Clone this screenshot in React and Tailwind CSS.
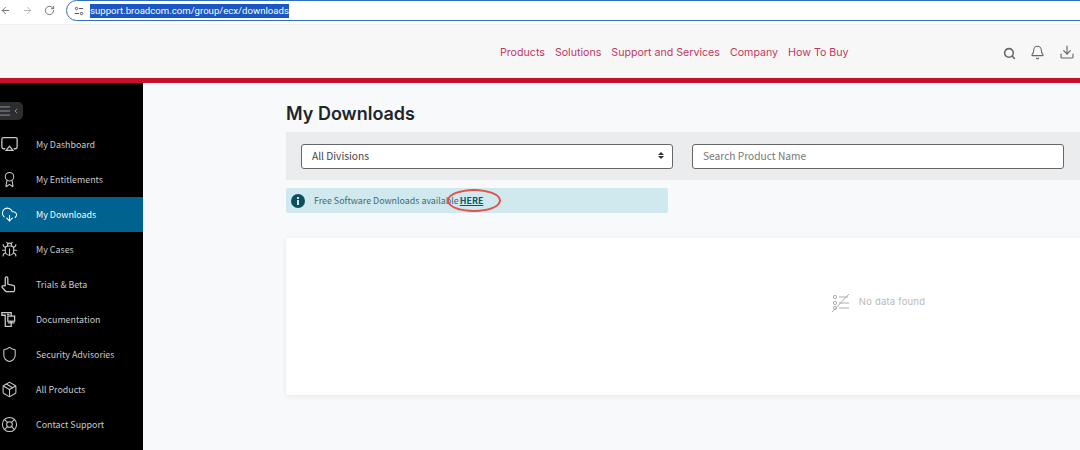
import { ArrowLeft, ArrowRight, RotateCw, Bell, Download, Search, Shield, Package, LifeBuoy, Bug, Award, CloudDownload, ChevronLeft, Menu } from "lucide-react";

const navLinks = ["Products", "Solutions", "Support and Services", "Company", "How To Buy"];

function DocsIcon(props) {
  return (
    <svg viewBox="0 0 20 20" fill="none" stroke="currentColor" strokeWidth="1.3" {...props}>
      <path d="M1 2h11v16H5V5H1z" />
      <rect x="8" y="6" width="8" height="6" fill="#000" />
      <path d="M12 12v2M8 14h8M7 4h3" />
    </svg>
  );
}

function ScreenIcon(props) {
  return (
    <svg viewBox="0 0 20 20" fill="none" stroke="currentColor" strokeWidth="1.3" {...props}>
      <path d="M5 15H3a2 2 0 0 1-2-2V4a2 2 0 0 1 2-2h14a2 2 0 0 1 2 2v9a2 2 0 0 1-2 2h-2" />
      <path d="M10 12l4 5H6z" />
    </svg>
  );
}

function HandIcon(props) {
  return (
    <svg viewBox="0 0 20 20" fill="none" stroke="currentColor" strokeWidth="1.4" strokeLinejoin="round" {...props}>
      <path d="M5 2.5a1.5 1.5 0 0 1 3 0v7l6 1.5a2 2 0 0 1 2 2V16a3 3 0 0 1-1 2.5H6L1.5 13.5c-1-1 0-3 3.5-2z" />
    </svg>
  );
}

function NoDataIcon(props) {
  return (
    <svg viewBox="0 0 20 20" fill="none" stroke="currentColor" strokeWidth="1" {...props}>
      <circle cx="4" cy="4" r="1.6" />
      <circle cx="4" cy="10" r="1.6" />
      <circle cx="4" cy="15" r="1.6" />
      <path d="M8 4h9M8 10h10M8 15h10M1 19L18 1" />
    </svg>
  );
}

const sideItems = [
  { label: "My Dashboard", icon: ScreenIcon },
  { label: "My Entitlements", icon: Award },
  { label: "My Downloads", icon: CloudDownload, active: true },
  { label: "My Cases", icon: Bug },
  { label: "Trials & Beta", icon: HandIcon },
  { label: "Documentation", icon: DocsIcon },
  { label: "Security Advisories", icon: Shield },
  { label: "All Products", icon: Package },
  { label: "Contact Support", icon: LifeBuoy },
];

function SideItem({ item }) {
  const Icon = item.icon;
  return (
    <div className={`h-[35px] flex items-center shrink-0 ${item.active ? "bg-[#00628f] text-white" : "text-[#c9c9c9]"}`}>
      <div className="w-[36px] pl-[1px] shrink-0">
        <Icon size={17} strokeWidth={1.5} className="w-[17px] h-[17px]" />
      </div>
      <span className="text-[8.9px] mt-[1px]">{item.label}</span>
    </div>
  );
}

export default function App() {
  return (
    <div className="w-[1080px] h-[450px] overflow-hidden flex flex-col bg-[#f7f9fb] font-['Noto_Sans_CJK_SC',sans-serif]">
      <div className="h-[25px] shrink-0 bg-white flex items-start border-b border-[#efefef]">
        <div className="flex items-center h-[21px] text-[#6b6b6b] gap-[11px] w-[66px] shrink-0">
          <ArrowLeft size={11} />
          <ArrowRight size={11} className="text-[#b5b5b5]" />
          <RotateCw size={11} />
        </div>
        <div className="flex-1 h-[21px] -mr-4 border-[1.5px] border-[#2f6fbd] rounded-full flex items-center pl-[7px]">
          <svg viewBox="0 0 12 12" className="w-[10px] h-[10px] mr-[6px] text-[#555]" fill="none" stroke="currentColor" strokeWidth="1.2">
            <circle cx="3" cy="3" r="1.4" />
            <circle cx="9" cy="9" r="1.4" />
            <path d="M6 3h5M1 9h5" />
          </svg>
          <span className="text-[9.6px] leading-[14px] bg-[#1a56c4] text-white font-['Roboto',sans-serif]">support.broadcom.com/group/ecx/downloads</span>
        </div>
      </div>

      <header className="h-[53px] shrink-0 bg-[#f7f7f7] flex items-center pl-[500px] pr-[5px]">
        <nav className="flex gap-[10px] mt-[2px] text-[10.65px] text-[#c2375f] font-['Inter',sans-serif]">
          {navLinks.map((link) => (
            <a key={link}>{link}</a>
          ))}
        </nav>
        <div className="ml-auto flex items-center text-[#666]">
          <Search size={13} strokeWidth={2.8} className="mt-[4px]" />
          <Bell size={15} strokeWidth={1.7} className="ml-[14px] mt-[2px]" />
          <Download size={16} strokeWidth={1.7} className="ml-[14px] mt-[1px]" />
        </div>
      </header>
      <div className="h-[5px] shrink-0 bg-[#c8102e]" />

      <div className="flex flex-1 min-h-0">
        <aside className="w-[143px] shrink-0 bg-black flex flex-col overflow-hidden">
          <div className="h-[18px] w-[23px] mt-[19px] mb-[7px] shrink-0 bg-[#2b2d30] rounded-r-[5px] flex items-center text-[#bbb]">
            <Menu size={14} strokeWidth={1.2} className="-ml-[2px]" />
            <ChevronLeft size={8} />
          </div>
          {sideItems.map((item) => (
            <SideItem key={item.label} item={item} />
          ))}
        </aside>

        <main className="flex-1 min-w-0 pl-[143px] flex flex-col overflow-hidden">
          <h1 className="text-[18px] leading-[24px] mt-[19px] font-semibold text-[#212529] font-['Inter',sans-serif]">My Downloads</h1>
          <div className="mt-[6px] h-[48px] shrink-0 bg-[#ebecee] flex items-center pl-[15px] gap-[19px]">
            <div className="w-[372px] h-[25px] pb-[1px] bg-white border border-[#666] rounded-[3px] flex items-center justify-between pl-[10px] pr-[8px] text-[10.2px] text-[#444]">
              <span>All Divisions</span>
              <span className="flex flex-col gap-[1px]">
                <span className="w-0 h-0 border-x-[3px] border-x-transparent border-b-[3px] border-b-[#333]" />
                <span className="w-0 h-0 border-x-[3px] border-x-transparent border-t-[3px] border-t-[#333]" />
              </span>
            </div>
            <div className="w-[372px] h-[25px] pb-[1px] bg-white border border-[#666] rounded-[3px] flex items-center pl-[10px] text-[10.2px] text-[#777]">
              Search Product Name
            </div>
          </div>

          <div className="relative mt-[8px] w-[382px] h-[25px] shrink-0 bg-[#cfe9ee] rounded-[2px] flex items-center pl-[5px] text-[8.9px] text-[#3f6a74]">
            <svg viewBox="0 0 14 14" className="w-[14px] h-[14px] mr-[9px]">
              <circle cx="7" cy="7" r="7" fill="#0d4f5f" />
              <rect x="6" y="6" width="2" height="5" fill="#cfe9ee" />
              <rect x="6" y="3" width="2" height="2" fill="#cfe9ee" />
            </svg>
            <span>Free Software Downloads available</span>
            <a className="ml-[1px] font-bold underline text-[#0d5566]">HERE</a>
            <div className="absolute left-[161px] top-[1px] w-[54px] h-[23px] rounded-[50%] border-2 border-[#e0524a]" />
          </div>

          <div className="mt-[25px] w-[1184px] h-[157px] shrink-0 bg-white rounded-l-[3px] shadow-[0_1px_6px_rgba(0,0,0,0.08)] flex items-center justify-center pb-[28px] text-[#b9b9b9]">
            <NoDataIcon className="w-[20px] h-[20px] mr-[8px] text-[#adadad]" />
            <span className="text-[9.5px] font-['Inter',sans-serif] tracking-[0.2px]">No data found</span>
          </div>
        </main>
      </div>
    </div>
  );
}
